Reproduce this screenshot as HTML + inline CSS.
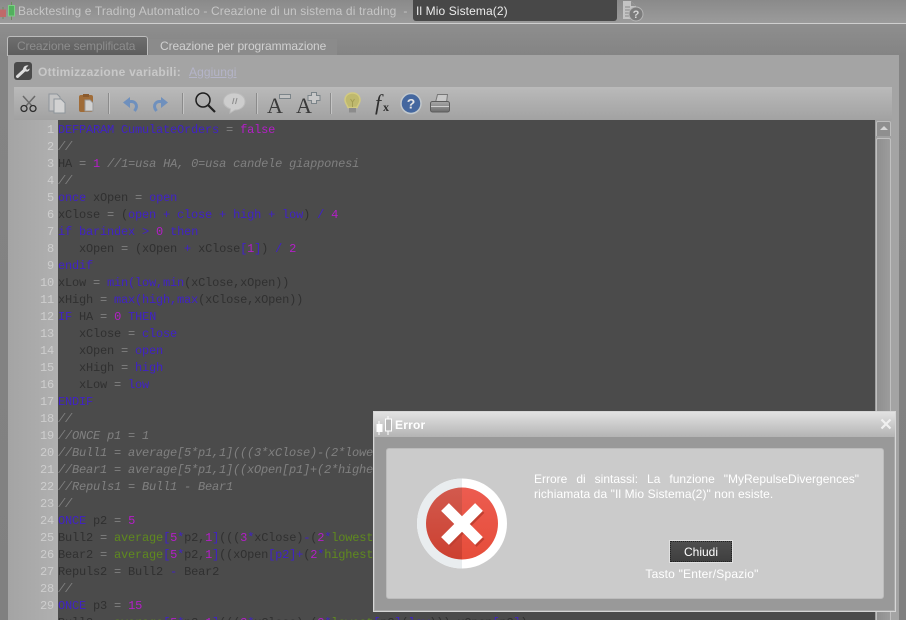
<!DOCTYPE html>
<html><head><meta charset="utf-8">
<style>
html,body{margin:0;padding:0;background:#7f7f7f}
#r{position:relative;width:906px;height:620px;overflow:hidden;background:linear-gradient(#8e8e8e 24px,#848484 55px,#808080);font-family:"Liberation Sans",sans-serif}
.a{position:absolute}
.t{position:absolute;white-space:pre}
#code{position:absolute;left:58px;top:120px;width:817px;height:500px;background:#4b4b4b;overflow:hidden}
#code div{position:absolute;left:0;white-space:pre;font:12px/17px "Liberation Mono",monospace;letter-spacing:-.2px;color:#303030;height:17px}
#nums{position:absolute;left:8px;top:120px;width:46px;height:500px;overflow:hidden}
#nums div{position:absolute;right:0;font:12px/17px "Liberation Mono",monospace;letter-spacing:-.2px;color:#cdcdcd;height:17px}
b,i,u,s{text-decoration:none;font-weight:normal;font-style:normal}
b{color:#4022c6} u{color:#b41ec8} s{color:#5f8a1e} i{color:#808080;font-style:italic}
em{font-style:normal;color:#808080}
.sep{position:absolute;top:93px;width:1px;height:21px;background:#8b8b8b;border-right:1px solid #c4c4c4}
</style></head>
<body><div id="r">
<!-- top bar -->
<div class="a" style="left:0;top:0;width:906px;height:23px;background:linear-gradient(#8a8a8a,#9b9b9b)"></div>
<div class="a" style="left:0;top:23px;width:906px;height:1px;background:#cfcfcf"></div>
<svg class="a" style="left:0;top:0" width="18" height="22" viewBox="0 0 18 22">
<path d="M3 7v12M11.500 2v18" stroke="#6d8d5f" stroke-width="1"/>
<rect x="0" y="9.500" width="6" height="7.500" fill="#c06a6a"/>
<rect x="8.500" y="5.500" width="6" height="10.500" fill="#52b05e" stroke="#7dcf85"/>
</svg>
<div class="t" style="left:18px;top:3px;font-size:12px;line-height:16px;color:#c6c6c6;letter-spacing:.12px">Backtesting e Trading Automatico - Creazione di un sistema di trading  -</div>
<div class="a" style="left:413px;top:0;width:204px;height:21px;background:#484848;border-radius:0 0 3px 3px"></div>
<div class="t" style="left:416px;top:3px;font-size:12px;line-height:16px;color:#ececec;letter-spacing:.1px">Il Mio Sistema(2)</div>
<svg class="a" style="left:622px;top:0" width="24" height="22" viewBox="0 0 24 22">
<path d="M1 1h8l5 5v13H1z" fill="#c4c4c4"/><path d="M3 7h5M3 10h5M3 13h5M3 16h5" stroke="#8a8a8a"/>
<path d="M9 1v5h5" fill="#8f8f8f"/>
<circle cx="14" cy="14" r="7" fill="#7c7c7c" stroke="#b5b5b5"/>
<text x="14" y="18" font-family="Liberation Sans" font-size="11" font-weight="bold" fill="#d8d8d8" text-anchor="middle">?</text>
</svg>
<!-- tabs -->
<div class="a" style="left:7px;top:36px;width:139px;height:19px;background:linear-gradient(#6e6e6e,#5d5d5d);border:1px solid #bdbdbd;border-bottom:0;border-radius:3px 3px 0 0;box-sizing:content-box"></div>
<div class="t" style="left:17px;top:38px;font-size:12px;line-height:16px;color:#8d8d8d;letter-spacing:-.14px">Creazione semplificata</div>
<div class="a" style="left:149px;top:39px;width:188px;height:16px;background:#8b8b8b"></div>
<div class="t" style="left:160px;top:38px;font-size:12px;line-height:16px;color:#d0d0d0;letter-spacing:-.09px">Creazione per programmazione</div>
<!-- panel -->
<div class="a" style="left:8px;top:55px;width:891px;height:565px;background:#a4a4a4"></div>
<div class="a" style="left:14px;top:62px;width:18px;height:18px;background:#4a4a4a;border-radius:3px"></div>
<svg class="a" style="left:14px;top:62px" width="18" height="18" viewBox="0 0 18 18"><path d="M3.500 14.500 10 8.500" stroke="#dedede" stroke-width="3" stroke-linecap="round"/><path d="M9 8c0-3 2-5 5.500-4.500L12 6l1 2 2.500-1.500C16 9.500 12 11 9 8z" fill="#dedede"/></svg>
<div class="t" style="left:38px;top:64px;font-size:12px;line-height:16px;font-weight:bold;color:#c8c8c8;letter-spacing:.25px">Ottimizzazione variabili:</div>
<div class="t" style="left:189px;top:64px;font-size:12px;line-height:16px;color:#b4b4c8;text-decoration:underline;letter-spacing:.1px">Aggiungi</div>
<!-- toolbar -->
<div class="a" style="left:14px;top:87px;width:878px;height:33px;background:linear-gradient(#bababa,#a2a2a2)"></div>
<div class="sep" style="left:108px"></div>
<div class="sep" style="left:182px"></div>
<div class="sep" style="left:256px"></div>
<div class="sep" style="left:330px"></div>
<svg class="a" style="left:14px;top:87px" width="480" height="33" viewBox="14 87 480 33" fill="none">
<defs><linearGradient id="pr" x1="0" y1="0" x2="0" y2="1"><stop offset="0" stop-color="#a8a8a8"/><stop offset=".5" stop-color="#8c8c8c"/><stop offset="1" stop-color="#6c6c6c"/></linearGradient></defs>
<!-- scissors -->
<path d="M23 96l9 10M35 96l-9 10" stroke="#6a6a6a" stroke-width="1.500"/>
<circle cx="24" cy="108.500" r="3" stroke="#2e2e2e" stroke-width="1.300"/><circle cx="33" cy="108.500" r="3" stroke="#2e2e2e" stroke-width="1.300"/>
<!-- copy -->
<path d="M49 94h8l3 3v14H49z" fill="#c4c4c4" stroke="#8e959b"/>
<path d="M54 99h7l4 4v10H54z" fill="#d2d2d2" stroke="#8e959b"/>
<!-- paste -->
<rect x="79" y="95" width="14" height="17" rx="2" fill="#a06c38"/><rect x="83" y="94" width="6" height="3" fill="#8a5a2e"/>
<path d="M85 100h5l3 3v8h-8z" fill="#d0d0d0" stroke="#9a9a9a"/>
<!-- undo/redo -->
<path d="M128 102C135 100 139 105 134.500 111" stroke="#6f90bd" stroke-width="3"/>
<path d="M123 102.500L130 97V108z" fill="#6f90bd"/>
<path d="M163 102C156 100 152 105 156.500 111" stroke="#6f90bd" stroke-width="3"/>
<path d="M168 102.500L161 97V108z" fill="#6f90bd"/>
<!-- search -->
<circle cx="203" cy="100" r="7" stroke="#1d1d1d" stroke-width="1.500"/>
<path d="M208 105l7 7" stroke="#222" stroke-width="2.200"/>
<!-- bubble -->
<path d="M234 93c7 0 11 4 11 8.500s-4 8.500-10 8.500l-5 3 .5-4c-4-1.500-7-4-7-7.500 0-5 4.500-8.500 10.500-8.500z" fill="#cdcdcd" stroke="#bbb"/>
<path d="M232.500 104l1.500-6M235.500 104l1.500-6" stroke="#8a8a8a"/>
<!-- A- / A+ -->
<rect x="279.500" y="94.500" width="11" height="4" fill="#c2c2c2" stroke="#7b8489"/>
<path d="M311.500 92.500h5v3h3.500v5h-3.500v3h-5v-3H308v-5h3.500z" fill="#c8c8c8" stroke="#7b8489"/>
<!-- bulb -->
<path d="M352.500 93c4.500 0 7.500 3 7.500 7 0 3-2 4.500-3 7.500h-9c-1-3-3-4.500-3-7.500 0-4 3-7 7.500-7z" fill="#bfb96e" stroke="#d2ca80" stroke-width="1.500"/>
<path d="M350.500 99l2 3 2-3M352.500 102v5" stroke="#a39d55"/>
<rect x="349" y="108" width="7" height="4.500" fill="#8c8c8c"/>
<!-- help -->
<circle cx="411" cy="103.500" r="10" fill="#44679f" stroke="#c2c8cc" stroke-width="1.500"/>
<!-- printer -->
<path d="M437.500 94.500h10l-1 8h-11z" fill="#c8c8c8" stroke="#777"/>
<rect x="430.500" y="101.500" width="19" height="10.500" rx="2" fill="url(#pr)" stroke="#5c5c5c"/>
<path d="M431 106.500h18" stroke="#cfcfcf"/>
<text x="267" y="113" font-family="Liberation Serif" font-size="22" fill="#3a3a3a">A</text>
<text x="296" y="113" font-family="Liberation Serif" font-size="22" fill="#3a3a3a">A</text>
<text x="375" y="110" font-family="Liberation Serif" font-size="22" font-style="italic" fill="#2f2f2f">f</text>
<text x="383" y="111" font-family="Liberation Serif" font-size="12" font-weight="bold" fill="#2f2f2f">x</text>
<text x="411" y="108.500" font-family="Liberation Sans" font-size="14" font-weight="bold" fill="#e6e6e6" text-anchor="middle">?</text>
</svg>
<!-- gutter -->
<div class="a" style="left:8px;top:120px;width:50px;height:500px;background:linear-gradient(90deg,#a4a4a4,#b0b0b0)"></div>
<div id="nums">
<div style="top:2px">1</div><div style="top:19px">2</div><div style="top:36px">3</div><div style="top:53px">4</div><div style="top:70px">5</div><div style="top:87px">6</div><div style="top:104px">7</div><div style="top:121px">8</div><div style="top:138px">9</div><div style="top:155px">10</div><div style="top:172px">11</div><div style="top:189px">12</div><div style="top:206px">13</div><div style="top:223px">14</div><div style="top:240px">15</div><div style="top:257px">16</div><div style="top:274px">17</div><div style="top:291px">18</div><div style="top:308px">19</div><div style="top:325px">20</div><div style="top:342px">21</div><div style="top:359px">22</div><div style="top:376px">23</div><div style="top:393px">24</div><div style="top:410px">25</div><div style="top:427px">26</div><div style="top:444px">27</div><div style="top:461px">28</div><div style="top:478px">29</div>
</div>
<!-- code -->
<div id="code">
<div style="top:2px"><b>DEFPARAM CumulateOrders</b> <em>=</em> <u>false</u></div>
<div style="top:19px"><i>//</i></div>
<div style="top:36px">HA <em>=</em> <u>1</u> <i>//1=usa HA, 0=usa candele giapponesi</i></div>
<div style="top:53px"><i>//</i></div>
<div style="top:70px"><b>once</b> xOpen <em>=</em> <b>open</b></div>
<div style="top:87px">xClose <em>=</em> (<b>open + close + high + low</b>) <b>/</b> <u>4</u></div>
<div style="top:104px"><b>if barindex &gt;</b> <u>0</u> <b>then</b></div>
<div style="top:121px">   xOpen <em>=</em> (xOpen <b>+</b> xClose<b>[</b><u>1</u><b>]</b>) <b>/</b> <u>2</u></div>
<div style="top:138px"><b>endif</b></div>
<div style="top:155px">xLow <em>=</em> <b>min(low,min</b>(xClose,xOpen))</div>
<div style="top:172px">xHigh <em>=</em> <b>max(high,max</b>(xClose,xOpen))</div>
<div style="top:189px"><b>IF</b> HA <em>=</em> <u>0</u> <b>THEN</b></div>
<div style="top:206px">   xClose <em>=</em> <b>close</b></div>
<div style="top:223px">   xOpen <em>=</em> <b>open</b></div>
<div style="top:240px">   xHigh <em>=</em> <b>high</b></div>
<div style="top:257px">   xLow <em>=</em> <b>low</b></div>
<div style="top:274px"><b>ENDIF</b></div>
<div style="top:291px"><i>//</i></div>
<div style="top:308px"><i>//ONCE p1 = 1</i></div>
<div style="top:325px"><i>//Bull1 = average[5*p1,1](((3*xClose)-(2*lowest[p1](low)))-xOpen[p1])</i></div>
<div style="top:342px"><i>//Bear1 = average[5*p1,1]((xOpen[p1]+(2*highest[p1](high))-(3*xClose)))</i></div>
<div style="top:359px"><i>//Repuls1 = Bull1 - Bear1</i></div>
<div style="top:376px"><i>//</i></div>
<div style="top:393px"><b>ONCE</b> p2 <em>=</em> <u>5</u></div>
<div style="top:410px">Bull2 <em>=</em> <s>average</s><b>[</b><u>5</u><b>*</b>p2,<u>1</u><b>]</b>(((<u>3</u><b>*</b>xClose)<b>-</b>(<u>2</u><b>*</b><s>lowest</s></div>
<div style="top:427px">Bear2 <em>=</em> <s>average</s><b>[</b><u>5</u><b>*</b>p2,<u>1</u><b>]</b>((xOpen<b>[p2]+</b>(<u>2</u><b>*</b><s>highest</s></div>
<div style="top:444px">Repuls2 <em>=</em> Bull2 <b>-</b> Bear2</div>
<div style="top:461px"><i>//</i></div>
<div style="top:478px"><b>ONCE</b> p3 <em>=</em> <u>15</u></div>
<div style="top:495px">Bull3 <em>=</em> <s>average</s><b>[</b><u>5</u><b>*</b>p3,<u>1</u><b>]</b>(((<u>3</u><b>*</b>xClose)<b>-</b>(<u>2</u><b>*</b><s>lowest</s><b>[</b>p3<b>]</b>(<b>low</b>)))<b>-</b>xOpen<b>[</b>p3<b>]</b>)</div>
</div>
<!-- scrollbar -->
<div class="a" style="left:875px;top:120px;width:16px;height:500px;background:#a0a0a0"></div>
<div class="a" style="left:876px;top:121px;width:13px;height:14px;background:#8f8f8f;border:1px solid #bdbdbd;border-bottom:0;border-radius:2px 2px 0 0"></div>
<div class="a" style="left:880px;top:126px;width:0;height:0;border-left:4px solid transparent;border-right:4px solid transparent;border-bottom:4px solid #d6d6d6"></div>
<div class="a" style="left:876px;top:138px;width:13px;height:482px;background:linear-gradient(90deg,#8f8f8f,#9c9c9c);border:1px solid #c0c0c0;border-bottom:0;border-radius:2px 2px 0 0"></div>
<!-- dialog -->
<div class="a" style="left:373px;top:411px;width:523px;height:201px;background:#999;border:1px solid #d6d6d6;box-sizing:border-box;box-shadow:inset 0 0 0 1px #aaa"></div>
<div class="a" style="left:374px;top:412px;width:521px;height:25px;background:linear-gradient(#e2e2e2,#b4b4b4)"></div>
<svg class="a" style="left:375px;top:415px" width="20" height="22" viewBox="0 0 20 22"><path d="M4 6v14M13 1v19" stroke="#fff"/><rect x="1.500" y="9" width="6" height="8" fill="#fff"/><rect x="10.500" y="4" width="6" height="12" fill="#b8b8b8" stroke="#fff"/></svg>
<div class="t" style="left:395px;top:417px;font-size:12px;line-height:16px;font-weight:bold;color:#fff;letter-spacing:.2px">Error</div>
<svg class="a" style="left:880px;top:418px" width="12" height="12" viewBox="0 0 12 12"><path d="M1.500 1.500l9 9M10.500 1.500l-9 9" stroke="#f0f0f0" stroke-width="2.200"/></svg>
<div class="a" style="left:386px;top:448px;width:498px;height:151px;background:#cbcbcb;border:1px solid #bcbcbc;box-sizing:border-box;border-radius:3px"></div>
<svg class="a" style="left:416px;top:478px" width="92" height="92" viewBox="0 0 92 92">
<defs>
<linearGradient id="gl" x1="0" y1="0" x2="0" y2="1"><stop offset="0" stop-color="#d25a4e"/><stop offset="1" stop-color="#cc4030"/></linearGradient>
<linearGradient id="gr" x1="0" y1="0" x2="0" y2="1"><stop offset="0" stop-color="#ec5c50"/><stop offset="1" stop-color="#e64d3a"/></linearGradient>
</defs>
<circle cx="46" cy="45.500" r="45" fill="#fff"/>
<path d="M46 .5a45 45 0 0 0 0 90z" fill="#e9edef"/>
<path d="M46 9.500a36 36 0 0 1 0 72z" fill="url(#gr)"/>
<path d="M46 9.500a36 36 0 0 0 0 72z" fill="url(#gl)"/>
<path d="M29 29l34 34M63 29L29 63" stroke="#c23f30" stroke-width="11" transform="translate(1.500 2)"/>
<path d="M29 29l34 34M63 29L29 63" stroke="#fff" stroke-width="11"/>
</svg>
<div class="t" style="left:534px;top:472px;width:325px;font-size:12px;line-height:15px;color:#fff;text-align:justify;text-align-last:justify;white-space:normal">Errore di sintassi: La funzione "MyRepulseDivergences"</div>
<div class="t" style="left:534px;top:487px;font-size:12px;line-height:15px;color:#fff;letter-spacing:.09px">richiamata da "Il Mio Sistema(2)" non esiste.</div>
<div class="a" style="left:669px;top:540px;width:64px;height:23px;background:linear-gradient(#4f4f4f,#3e3e3e);border:1px solid #e0e0e0;box-sizing:border-box;outline:1px dotted #222;outline-offset:-2px"></div>
<div class="t" style="left:669px;top:544px;width:64px;text-align:center;font-size:12px;line-height:16px;color:#fff">Chiudi</div>
<div class="t" style="left:603px;top:566px;width:198px;text-align:center;font-size:12px;line-height:16px;color:#fff;letter-spacing:.2px">Tasto "Enter/Spazio"</div>
</div></body></html>
